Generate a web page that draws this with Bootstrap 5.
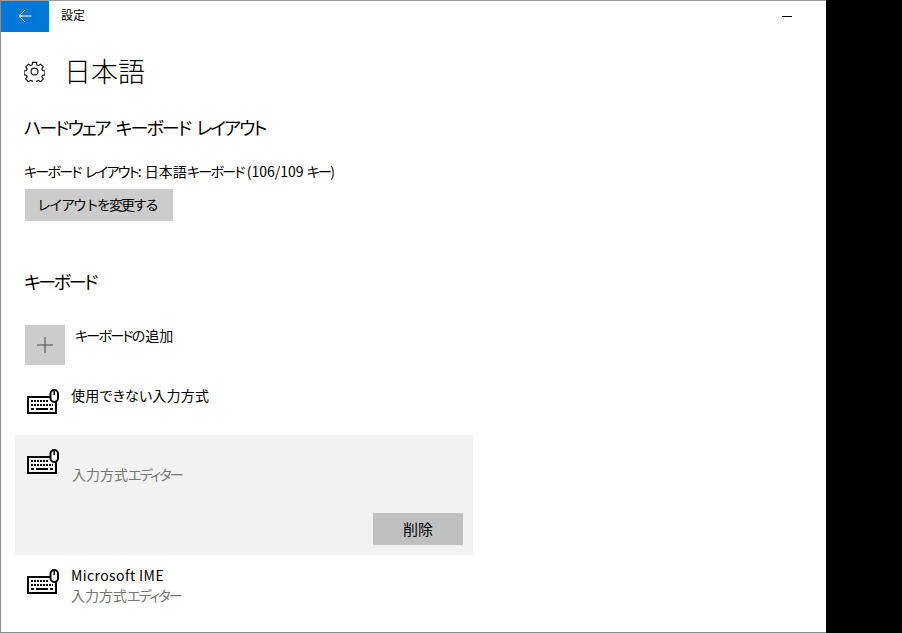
<!DOCTYPE html>
<html lang="ja">
<head>
    <meta charset="UTF-8">
    <meta name="viewport" content="width=device-width, initial-scale=1.0">
    <title>設定</title>
    <link href="https://cdn.jsdelivr.net/npm/bootstrap@5.3.0/dist/css/bootstrap.min.css" rel="stylesheet">
    <style>
        html, body { height: 100%; }
        body {
            background: #000;
            overflow: hidden;
            font-family: "Noto Sans CJK JP", "Noto Sans", sans-serif;
            font-feature-settings: "palt";
            font-weight: 400;
            font-size: 14px;
            line-height: 20px;
            color: #000;
        }
        .app-window {
            width: 826px;
            height: 633px;
            background: #fff;
            border: 1px solid #8c8c8c;
            border-right: 0;
            border-top-color: #9c9c9c;
        }
        .title-bar { height: 31px; }
        .back-btn {
            width: 48px;
            height: 31px;
            background: #0078d7;
            border: 0;
            border-radius: 0;
            padding: 0 0 2px;
        }
        .title-text { font-size: 12px; margin-left: 12px; line-height: 27px; }
        .min-btn { width: 10px; height: 1px; background: #000; margin: 0 34px 0 0; align-self: center; }
        .page-head { margin: 24px 0 0 23px; height: 30px; }
        .page-head h1 { font-size: 27px; line-height: 30px; font-weight: 300; margin: 0 0 0 19px; }
        .sect-title { font-size: 18px; line-height: 26px; font-weight: 400; margin: 0 0 0 23px; }
        .sect-one { margin-top: 28px; letter-spacing: -1.9px; word-spacing: 4px; }
        .layout-label { margin: 21px 0 0 23px; line-height: 20px; }
        .kn { letter-spacing: -1.7px; word-spacing: 3px; }
        .grey-btn {
            background: #ccc;
            border: 0;
            border-radius: 0;
            color: #000;
            font-size: 14px;
            font-weight: 400;
            line-height: 20px;
            height: 32px;
            padding: 0;
        }
        .change-btn { width: 148px; margin: 8px 0 0 24px; display: block; padding: 0 4px 2px 0; letter-spacing: -2px; }
        .sect-two { margin-top: 47px; letter-spacing: -2.4px; }
        .add-row { margin: 31px 0 0 24px; }
        .plus-tile { width: 40px; height: 40px; background: #ccc; }
        .add-text { margin: 0 0 0 10px; }
        .kbd-row { padding-left: 25px; }
        .kbd-icon { margin-top: 4px; flex-shrink: 0; }
        .plain-row { margin-top: 20px; height: 50px; }
        .row-text { margin-left: 12px; }
        .plain-row .row-text { letter-spacing: .2px; }
        .ime-name { letter-spacing: .4px; }
        .sub-text { color: #767676; }
        .picked-row {
            width: 458px;
            height: 120px;
            margin: 0 0 0 14px;
            padding: 10px 10px 10px 11px;
            background: #f2f2f2;
        }
        .picked-text { margin: 19px 0 0 13px; }
        .del-btn { width: 90px; background: #c0c0c0; font-size: 15px; }
        .ime-row { margin-top: 10px; }
    </style>
</head>
<body>
    <div class="app-window d-flex flex-column">
        <div class="title-bar d-flex">
            <button class="back-btn btn d-flex align-items-center justify-content-center" aria-label="戻る">
                <svg width="14" height="14" viewBox="0 0 14 14" fill="none" stroke="#fff" stroke-width="1">
                    <path d="M1 7H13.5M7 1L1 7L7 13"/>
                </svg>
            </button>
            <span class="title-text">設定</span>
            <div class="min-btn ms-auto"></div>
        </div>

        <div class="page-head d-flex align-items-center">
            <svg width="21" height="21" viewBox="0 0 22 22" fill="none" stroke="#111" stroke-width="1.2">
                <path d="M9 1.5h4l.5 2.6 1.7.7 2.2-1.5 2.8 2.8-1.5 2.2.7 1.7 2.6.5v4l-2.600.5-.7 1.7 1.5 2.2-2.8 2.8-2.2-1.5-1.7.7-.5 2.600h-4l-.5-2.600-1.7-.7-2.2 1.5-2.8-2.8 1.5-2.2-.7-1.700-2.600-.5v-4l2.600-.5.7-1.700-1.500-2.200 2.800-2.800 2.200 1.500 1.700-.7z"/>
                <circle cx="11" cy="11" r="3.6"/>
            </svg>
            <h1>日本語</h1>
        </div>

        <h2 class="sect-title sect-one">ハードウェア キーボード レイアウト</h2>
        <div class="layout-label"><span class="kn">キーボード レイアウト</span>: 日本語<span class="kn">キーボード</span> (106/109 <span class="kn">キー</span>)</div>
        <button class="grey-btn change-btn btn">レイアウトを変更する</button>

        <h2 class="sect-title sect-two">キーボード</h2>

        <div class="add-row d-flex align-items-start">
            <div class="plus-tile d-flex align-items-center justify-content-center">
                <svg width="16" height="16" viewBox="0 0 16 16" stroke="#444" stroke-width="1">
                    <path d="M8 0V16M0 8H16"/>
                </svg>
            </div>
            <div class="add-text"><span class="kn">キーボード</span>の追加</div>
        </div>

        <div class="kbd-row plain-row d-flex align-items-start">
            <svg class="kbd-icon" width="33" height="25" viewBox="0 0 33 25"><use href="#kbd"/></svg>
            <div class="row-text">使用できない入力方式</div>
        </div>

        <div class="picked-row d-flex flex-column">
            <div class="d-flex align-items-start">
                <svg class="kbd-icon" width="33" height="25" viewBox="0 0 33 25"><use href="#kbd"/></svg>
                <div class="picked-text sub-text">入力方式<span class="kn">エディター</span></div>
            </div>
            <button class="grey-btn del-btn btn mt-auto align-self-end">削除</button>
        </div>

        <div class="kbd-row ime-row d-flex align-items-start">
            <svg class="kbd-icon" width="33" height="25" viewBox="0 0 33 25"><use href="#kbd"/></svg>
            <div class="row-text">
                <div class="ime-name">Microsoft IME</div>
                <div class="sub-text">入力方式<span class="kn">エディター</span></div>
            </div>
        </div>
    </div>

    <svg width="0" height="0" class="d-block">
        <defs>
            <g id="kbd">
                <path d="M24.500 8H2V24H30V13" fill="none" stroke="#000" stroke-width="2"/>
                <rect x="24.500" y="1" width="7.500" height="12" rx="3.700" fill="#fff" stroke="#000" stroke-width="2"/>
                <path d="M28.200 2V6" stroke="#000" stroke-width="1.500"/>
                <path d="M5 12H23M5 16H27" stroke="#000" stroke-width="2" stroke-dasharray="2 1"/>
                <path d="M5 20H8M10 20H22M24 20H27" stroke="#000" stroke-width="2"/>
            </g>
        </defs>
    </svg>

    <script src="https://cdn.jsdelivr.net/npm/bootstrap@5.3.0/dist/js/bootstrap.bundle.min.js"></script>
</body>
</html>
